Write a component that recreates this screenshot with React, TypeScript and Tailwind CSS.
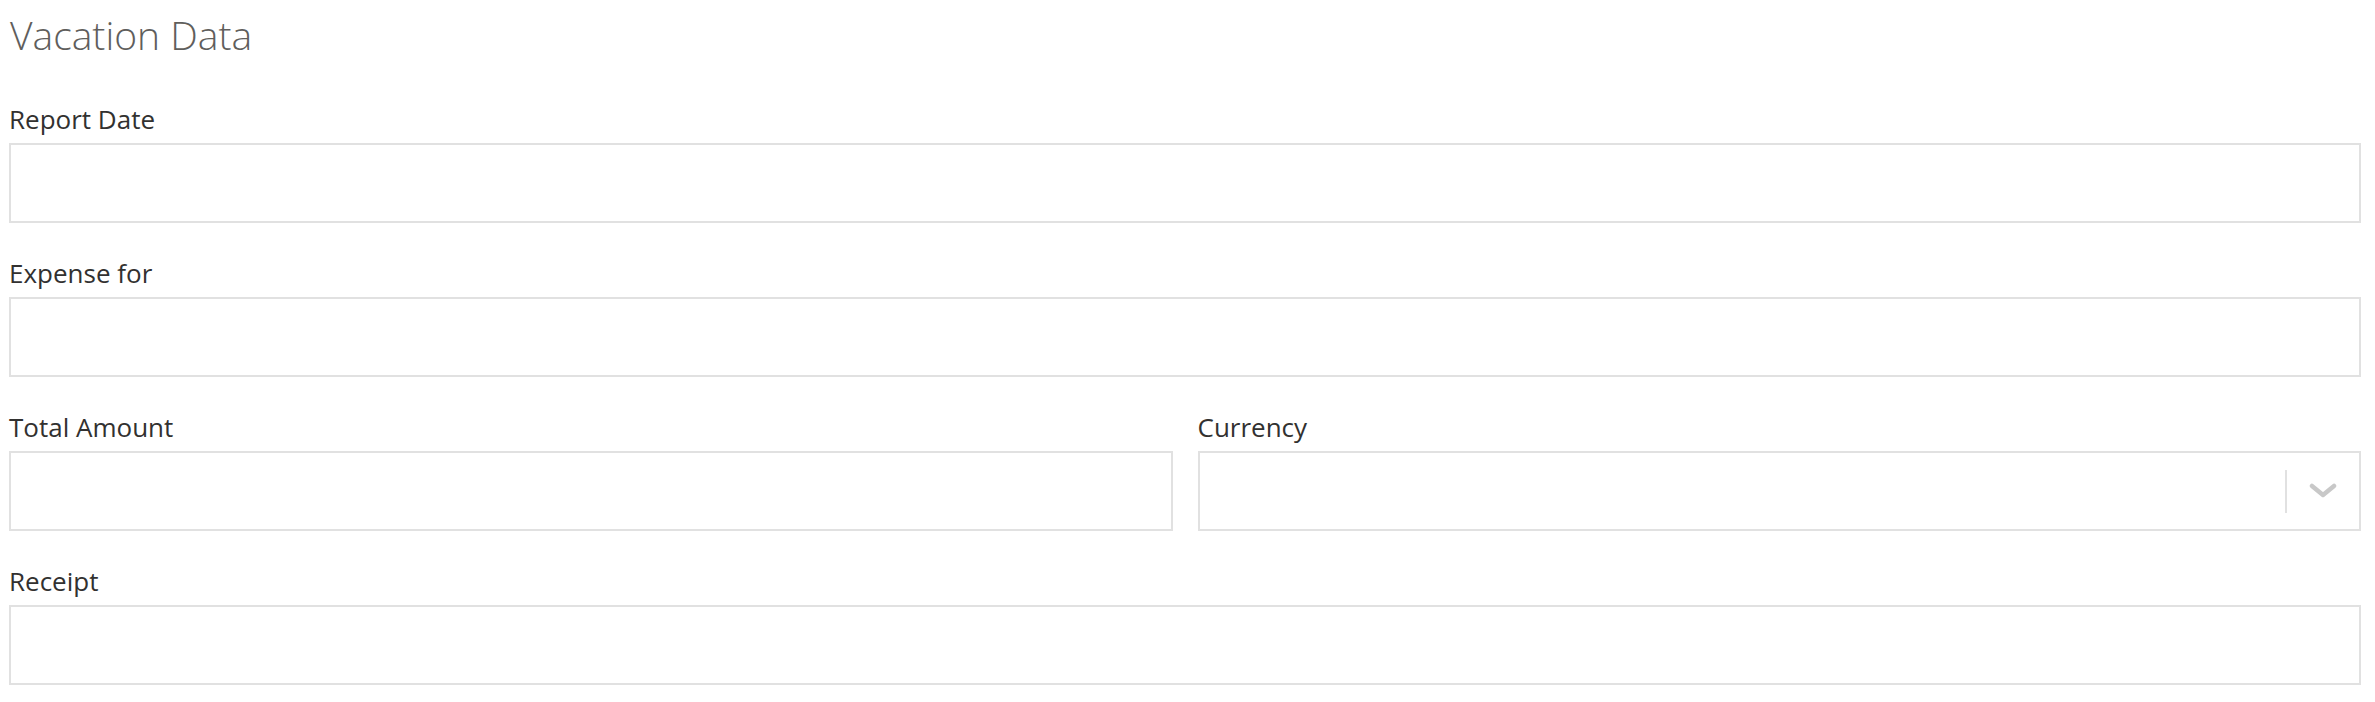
const fieldBox =
  "h-[80px] w-full border-2 border-[#e1e1e1] bg-white";

function Field({ label, children }: { label: string; children?: React.ReactNode }) {
  return (
    <div className="flex flex-col">
      <label className="mb-[8px] text-[26px] leading-[32px] text-[#323130]">
        {label}
      </label>
      {children ?? <div className={fieldBox} />}
    </div>
  );
}

export default function App() {
  return (
    <div
      className="min-h-screen bg-white pl-[9px] pr-[14px] pt-[10px]"
      style={{ fontFamily: '"Open Sans", "Noto Sans", sans-serif' }}
    >
      <h1 className="pl-[1px] text-[39px] font-light leading-[50px] text-[#605e5c]">
        Vacation Data
      </h1>

      <div className="mt-[43px] flex flex-col gap-[34px]">
        <Field label="Report Date" />
        <Field label="Expense for" />

        <div className="grid grid-cols-2 gap-[25px]">
          <Field label="Total Amount" />
          <Field label="Currency">
            <div className={`${fieldBox} flex items-center justify-end`}>
              <div className="h-[43px] w-[2px] bg-[#e1e1e1]" />
              <div className="flex w-[72px] items-center justify-center">
                <svg width="28" height="18" viewBox="0 0 28 18" fill="none">
                  <polyline
                    points="3,4 14,13 25,4"
                    stroke="#c8c8c8"
                    strokeWidth="4.5"
                    strokeLinecap="round"
                    strokeLinejoin="round"
                  />
                </svg>
              </div>
            </div>
          </Field>
        </div>

        <Field label="Receipt" />
      </div>
    </div>
  );
}
